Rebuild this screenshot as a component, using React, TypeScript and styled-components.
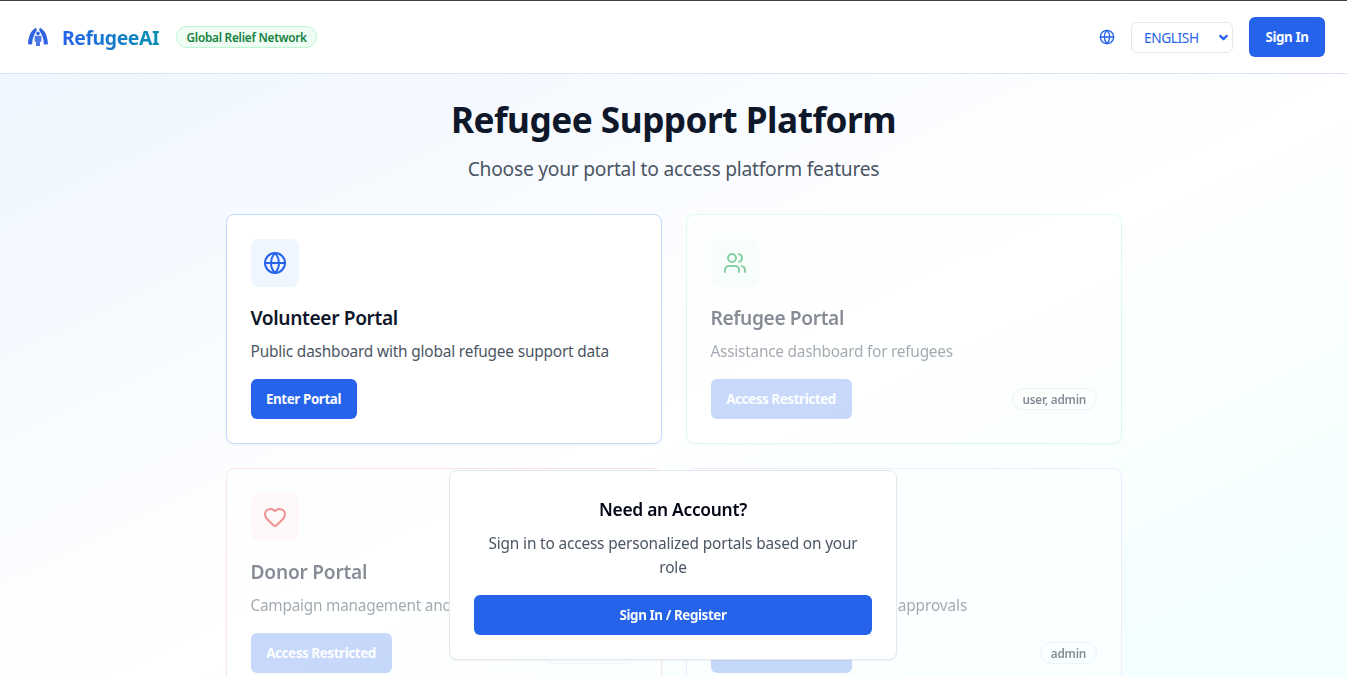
import React from "react";
import styled, { createGlobalStyle } from "styled-components";
import { Globe, Users, Heart, Shield, ChevronDown } from "lucide-react";

const Global = createGlobalStyle`
  *, *::before, *::after { box-sizing: border-box; }
  html, body { margin: 0; height: 100%; overflow: hidden; }
  body { font-family: "Noto Sans", "Open Sans", sans-serif; color: #0f172a; background: #fff; }
  h1, h2, h3, p { margin: 0; }
  button { font: inherit; }
`;

const Page = styled.div`
  height: 677px;
  overflow: hidden;
  display: flex;
  flex-direction: column;
`;

const Header = styled.header`
  flex: none;
  height: 74px;
  border-top: 1px solid #404044;
  border-bottom: 1px solid #dbe6f5;
  background: #fff;
  display: flex;
  align-items: center;
  justify-content: space-between;
  padding: 0 22px 0 27px;
`;

const Group = styled.div<{ $gap: number }>`
  display: flex;
  align-items: center;
  gap: ${(p) => p.$gap}px;
`;

const Brand = styled.span`
  font-size: 19.4px;
  line-height: 28px;
  font-weight: 700;
  margin: 2px 3px 0 0;
  width: 98px;
  letter-spacing: -0.4px;
  background: linear-gradient(90deg, #2563eb, #0891b2);
  background-clip: text;
  -webkit-background-clip: text;
  color: transparent;
`;

const Badge = styled.span<{ $green?: boolean }>`
  height: 22px;
  display: inline-flex;
  align-items: center;
  padding: 0 9.5px;
  border-radius: 11px;
  border: 1px solid ${(p) => (p.$green ? "#bbf7d0" : "#e2e8f0")};
  background: ${(p) => (p.$green ? "#f0fdf4" : "transparent")};
  color: ${(p) => (p.$green ? "#15803d" : "#0f172a")};
  font-size: 11.8px;
  font-weight: 600;
  white-space: nowrap;
  letter-spacing: -0.25px;
`;

const Language = styled.div`
  width: 102px;
  height: 31px;
  border: 1px solid #e2e8f0;
  border-radius: 6px;
  display: flex;
  align-items: center;
  justify-content: space-between;
  padding: 1px 2px 0 12px;
  color: #2563eb;
  font-size: 13.7px;
  letter-spacing: -0.4px;
`;

const Button = styled.button<{ $full?: boolean; $width?: number }>`
  height: 40px;
  width: ${(p) => (p.$full ? "100%" : `${p.$width}px`)};
  padding: 0 0 1px;
  border: 0;
  border-radius: 6px;
  background: #2563eb;
  color: #f8fafc;
  font-size: 13.4px;
  font-weight: 700;
  white-space: nowrap;
  letter-spacing: -0.4px;
  &:disabled { opacity: 0.5; }
`;

const Main = styled.main`
  flex: none;
  height: 656px;
  background: linear-gradient(to bottom right, #eff6ff, #ffffff, #f0ffff);
  display: flex;
  flex-direction: column;
  align-items: center;
  padding-top: 23px;
`;

const Title = styled.h1`
  font-size: 35.2px;
  line-height: 45px;
  font-weight: 700;
  letter-spacing: -0.5px;
`;

const Subtitle = styled.p`
  margin-top: 13px;
  font-size: 19.2px;
  line-height: 28px;
  color: #4b5563;
  letter-spacing: -0.23px;
`;

const Grid = styled.section`
  margin-top: 31px;
  width: 896px;
  display: grid;
  grid-template-columns: 1fr 1fr;
  gap: 24px;
`;

const Card = styled.article<{ $border: string; $locked?: boolean }>`
  height: 230px;
  padding: 24px;
  background: #fff;
  border: 1px solid ${(p) => p.$border};
  border-radius: 8px;
  box-shadow: 0 1px 2px rgba(0, 0, 0, 0.05);
  opacity: ${(p) => (p.$locked ? 0.5 : 1)};
`;

const IconTile = styled.div<{ $bg: string; $fg: string }>`
  width: 48px;
  height: 48px;
  border-radius: 8px;
  display: grid;
  place-items: center;
  background: ${(p) => p.$bg};
  color: ${(p) => p.$fg};
`;

const CardTitle = styled.h3<{ $spacing: number }>`
  margin-top: 16px;
  font-size: 19.2px;
  line-height: 30px;
  font-weight: 600;
  letter-spacing: ${(p) => p.$spacing}px;
`;

const CardText = styled.p<{ $spacing: number }>`
  margin-top: 7px;
  font-size: 15.4px;
  line-height: 24px;
  color: #4b5563;
  letter-spacing: ${(p) => p.$spacing}px;
  white-space: nowrap;
`;

const CardFoot = styled.div`
  margin-top: 15px;
  display: flex;
  align-items: center;
  justify-content: space-between;
`;

const Dialog = styled.aside`
  position: fixed;
  left: 449px;
  top: 470px;
  width: 448px;
  height: 190px;
  padding: 24px;
  border: 1px solid #e2e8f0;
  border-radius: 8px;
  background: #fff;
  box-shadow: 0 1px 2px rgba(0, 0, 0, 0.05);
  text-align: center;
`;

const DialogTitle = styled.h2`
  font-size: 17.4px;
  line-height: 28px;
  font-weight: 600;
  color: #020617;
  letter-spacing: -0.29px;
`;

const DialogText = styled.p`
  margin: 9px 0 15px;
  font-size: 15.4px;
  line-height: 24px;
  color: #4b5563;
  letter-spacing: -0.16px;
`;

const Logo = () => (
  <svg width="22" height="22" viewBox="0 0 22 22" fill="#2f62e0">
    <path d="M9 1.800C4.500 4 1.600 9 1 18.200l4.200.2C5.200 14 6.200 10 8.200 7L10 4Z" />
    <path d="M13 1.800C17.500 4 20.400 9 21 18.200l-4.200.2C16.800 14 15.800 10 13.800 7L12 4Z" />
    <circle cx="11" cy="7.400" r="1.800" />
    <path d="M7.600 9.800h6.800v5.400l-1.400 1V20H9v-3.800l-1.400-1Z" opacity=".85" />
  </svg>
);

const portals = [
  { title: "Volunteer Portal", text: "Public dashboard with global refugee support data", Icon: Globe, border: "#bfdbfe", bg: "#eff6ff", fg: "#2563eb", role: "", ts: -0.38, ps: -0.18 },
  { title: "Refugee Portal", text: "Assistance dashboard for refugees", Icon: Users, border: "#bbf7d0", bg: "#f0fdf4", fg: "#16a34a", role: "user, admin", ts: -0.38, ps: -0.24 },
  { title: "Donor Portal", text: "Campaign management and donations", Icon: Heart, border: "#fecaca", bg: "#fef2f2", fg: "#dc2626", role: "donor, admin", ts: -0.25, ps: -0.25 },
  { title: "Admin Portal", text: "System management and approvals", Icon: Shield, border: "#e9d5ff", bg: "#faf5ff", fg: "#9333ea", role: "admin", ts: -0.3, ps: -0.1 },
];

export default function App() {
  return (
    <Page>
      <Global />
      <Header>
        <Group $gap={13}>
          <Logo />
          <Brand>RefugeeAI</Brand>
          <Badge $green>Global Relief Network</Badge>
        </Group>
        <Group $gap={16}>
          <Globe size={16} color="#2563eb" />
          <Language>
            ENGLISH
            <ChevronDown size={13} strokeWidth={4} />
          </Language>
          <Button $width={76}>Sign In</Button>
        </Group>
      </Header>
      <Main>
        <Title>Refugee Support Platform</Title>
        <Subtitle>Choose your portal to access platform features</Subtitle>
        <Grid>
          {portals.map(({ title, text, Icon, border, bg, fg, role, ts, ps }) => (
            <Card key={title} $border={border} $locked={!!role}>
              <IconTile $bg={bg} $fg={fg}><Icon size={24} /></IconTile>
              <CardTitle $spacing={ts}>{title}</CardTitle>
              <CardText $spacing={ps}>{text}</CardText>
              <CardFoot>
                <Button $width={role ? 141 : 106} disabled={!!role}>{role ? "Access Restricted" : "Enter Portal"}</Button>
                {role && <Badge>{role}</Badge>}
              </CardFoot>
            </Card>
          ))}
        </Grid>
      </Main>
      <Dialog>
        <DialogTitle>Need an Account?</DialogTitle>
        <DialogText>Sign in to access personalized portals based on your role</DialogText>
        <Button $full>Sign In / Register</Button>
      </Dialog>
    </Page>
  );
}
